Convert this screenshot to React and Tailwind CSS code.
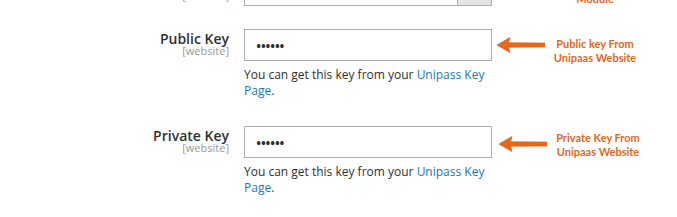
import React from "react";

const orange = "text-[#e4671c]";

function Arrow() {
  return (
    <svg width="48" height="16" viewBox="0 0 48 16" className="block">
      <path
        d="M0 8 L13 0.5 L11.5 5.8 L48 6.1 L48 10 L11.5 10.2 L13 15.5 Z"
        fill="#e4671c"
        stroke="#e4671c"
        strokeWidth="0.8"
        strokeLinejoin="round"
      />
    </svg>
  );
}

function Label({ children }) {
  return (
    <div className="w-[229px] shrink-0 flex flex-col items-end pt-[2px]">
      <div className="h-4 text-[14px] leading-4 font-semibold text-[#303030]">{children}</div>
      <div className="text-[11px] leading-[8px] text-[#999]">[website]</div>
    </div>
  );
}

function KeyRow({ label, lines, arrowMt, arrowMl, textMt, textW }) {
  return (
    <div className="flex items-start">
      <Label>{label}</Label>
      <div className="ml-[15px] w-[248px] shrink-0">
        <div className="h-8 border border-[#adadad] bg-white flex items-center pl-[11px] text-[14px] font-semibold text-[#303030] tracking-[-0.6px]">
          ••••••
        </div>
        <div className="mt-[6px] text-[12px] leading-4 text-[#303030]">
          <div className="whitespace-nowrap">
            You can get this key from your <a className="text-[#1979c3]">Unipass Key</a>
          </div>
          <div>
            <a className="text-[#1979c3]">Page</a>.
          </div>
        </div>
      </div>
      <div className={`${arrowMt} ${arrowMl} shrink-0`}>
        <Arrow />
      </div>
      <div
        className={`${textMt} ${textW} ml-[6px] shrink-0 text-center font-['Lato',sans-serif] font-bold text-[11px] leading-[14px] ${orange}`}
      >
        {lines.map((l) => (
          <div key={l} className="whitespace-nowrap">{l}</div>
        ))}
      </div>
    </div>
  );
}

export default function App() {
  return (
    <div className="w-[677px] h-[217px] overflow-hidden bg-white font-['Open_Sans',sans-serif]">
      <div className="-mt-[26px]">
        {/* previous field, mostly scrolled out of view */}
        <div className="flex items-start">
          <Label />
          <div className="ml-[15px] w-[248px] shrink-0 h-8 border border-[#adadad] bg-white flex justify-end">
            <div className="w-[34px] h-full bg-[#e3e3e3] border-l border-[#adadad]" />
          </div>
          <div
            className={`mt-[18px] ml-[60px] w-[86px] text-center font-['Lato',sans-serif] font-bold text-[11px] leading-[14px] ${orange}`}
          >
            Module
          </div>
        </div>

        <div className="mt-[23px] flex flex-col gap-[27px]">
          <KeyRow
            label="Public Key"
            lines={["Public key From", "Unipaas Website"]}
            arrowMt="mt-[8px]"
            arrowMl="ml-[5px]"
            textMt="mt-[8px]"
            textW="w-[88px]"
          />
          <KeyRow
            label="Private Key"
            lines={["Private Key From", "Unipaas Website"]}
            arrowMt="mt-[10px]"
            arrowMl="ml-[7px]"
            textMt="mt-[5px]"
            textW="w-[90px]"
          />
        </div>
      </div>
    </div>
  );
}
